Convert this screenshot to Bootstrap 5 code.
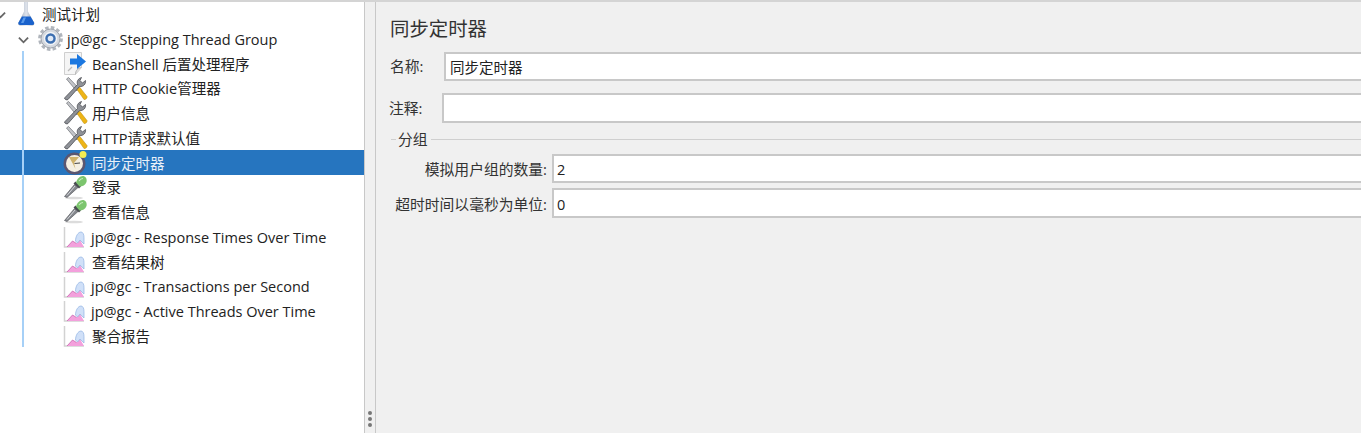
<!DOCTYPE html>
<html lang="en">
<head>
  <meta charset="UTF-8" />
  <meta name="viewport" content="width=device-width, initial-scale=1.0"/>
  <title>同步定时器</title>
  <link href="https://cdn.jsdelivr.net/npm/bootstrap@5.3.3/dist/css/bootstrap.min.css" rel="stylesheet"/>
  <style>
    html, body { height: 433px; overflow: hidden; }
    body {
      background: #f0f0f0;
      color: #222;
      font-family: "Open Sans", "Noto Sans CJK SC", sans-serif;
      font-size: 14.5px;
    }
    .app-shell { height: 433px; border-top: 2px solid #d4d4d4; }
    .tree-pane { width: 364px; background: #fff; position: relative; flex: none; overflow: hidden; }
    .tree-guide { position: absolute; left: 22px; top: 49px; height: 296px; width: 2px; background: #a6d0f7; z-index: 2; }
    .tree-list { margin-top: -.5px; }
    .tree-row { height: 24.75px; white-space: nowrap; padding-top: 2px; }
    .tree-row.is-active { background: #2675bf; color: #e9f0f8; }
    .tree-row svg { flex: none; }
    .lvl-0 { padding-left: 0; }
    .lvl-1 { padding-left: 18px; }
    .lvl-2 { padding-left: 63px; }
    .chev { width: 11px; height: 8px; }
    .lvl-0 .chev { margin-left: -5px; margin-right: 10px; }
    .lvl-1 .chev { margin-right: 9px; }
    .ico { width: 25px; height: 25px; margin-right: 4px; margin-top: -2px; }
    .lvl-0 .ico { width: 21px; margin-right: 5px; }
    .ico-tight { margin-right: 3px; }
    .split-bar {
      width: 12px; flex: none; position: relative;
      border-left: 1px solid #c8c8c8; border-right: 1px solid #c8c8c8;
    }
    .grip { position: absolute; left: 3px; top: 409px; }
    .grip span { display: block; width: 4px; height: 4px; border-radius: 50%; background: #777; margin-bottom: 2px; }
    .form-pane { padding: 14px 0 0 14px; min-width: 0; font-size: 14.8px; }
    .pane-title { font-size: 19.4px; line-height: 26px; margin: 0 0 10px 0; color: #333; font-weight: 400; }
    .field-label { color: #333; white-space: nowrap; }
    .jm-input {
      flex: 1 1 auto; min-width: 0;
      height: 29px; background: #fff; border: 2px solid #c8c8c8; border-right: 0;
      border-radius: 0; padding: 0 3px 0 3px; font-size: 14.5px; font-family: inherit; color: #222; outline: 0;
    }
    .name-row { margin-bottom: 12px; }
    .name-row .jm-input { padding-left: 4px; }
    .name-row .field-label { width: 54px; }
    .note-row { margin-left: -1px; }
    .note-row .field-label { width: 53px; }
    .note-row .jm-input { height: 30px; }
    .group-head { margin: 7px 0 0 1px; height: 18px; }
    .group-head .dash { width: 5px; border-top: 1px solid #cfcfcf; }
    .group-head .rest { flex: 1; border-top: 1px solid #cfcfcf; }
    .group-head span.cap { padding: 0 3px 0 2px; color: #333; }
    .group-row { margin-top: 5px; }
    .group-head + .group-row { margin-top: 6px; }
    .group-row .field-label { width: 162px; text-align: right; padding: 2px 5px 0 0; }
    .group-row .jm-input { padding-top: 2px; }
    .group-row + .group-row .jm-input { height: 30px; }
  </style>
</head>
<body>

<svg width="0" height="0" class="position-absolute">
  <defs>
    <linearGradient id="g-glass" x1="0" x2="1" y1="0" y2="0"><stop offset="0" stop-color="#98a4b6"/><stop offset=".5" stop-color="#dfe4ec"/><stop offset="1" stop-color="#8a96a8"/></linearGradient>
    <symbol id="i-chev" viewBox="0 0 12 8"><path d="M1 1.500 6 6.500 11 1.500" fill="none" stroke="#666" stroke-width="2"/></symbol>
    <symbol id="i-flask" viewBox="0 0 21 25">
      <path d="M8 1h4v9.500l6 11c.7 1.800-.2 3-1.800 3H4.300c-1.600 0-2.500-1.200-1.800-3l5.500-11z" fill="url(#g-glass)"/>
      <path d="M6 15.500h8.500l3.500 6c.5 1.500-.2 2.500-1.800 2.500H4.300c-1.600 0-2.300-1-1.800-2.500z" fill="#1a62cc"/>
      <path d="M7.500 16.500h2.500l-2.500 5.500H5z" fill="#5b9bea"/>
    </symbol>
    <symbol id="i-gear" viewBox="0 0 25 25">
      <circle cx="12.500" cy="12.500" r="9.500" fill="#d5d9df" stroke="#9ba1aa" stroke-width="1"/>
      <circle cx="12.500" cy="12.500" r="11" fill="none" stroke="#b0b5bc" stroke-width="2.800" stroke-dasharray="3.500 2.260"/>
      <circle cx="12.500" cy="12.500" r="6" fill="#3d6fb0" stroke="#f2f4f7" stroke-width="1.500"/>
      <circle cx="12.500" cy="12.500" r="2.800" fill="#dfe9f6"/>
    </symbol>
    <symbol id="i-bean" viewBox="0 0 25 25">
      <path d="M1.500 1.500h17v15l-6 7h-11z" fill="#f5f5f5" stroke="#cfcfcf"/>
      <path d="M12.500 23.500c0-4 2-6.500 6-7" fill="#dcdcdc" stroke="#b5b5b5"/>
      <path d="M5 20 9 16" stroke="#bbb" stroke-width="1.200"/>
      <path d="M14 3l9 7.500-9 7.500v-4.500h-7v-6h7z" fill="#1c78e0"/>
    </symbol>
    <symbol id="i-tools" viewBox="0 0 25 25">
      <path d="M3.500 3 5.500 1.500 16 12.500l-2.500 2.500z" fill="#c4c6ca" stroke="#6a6d73" stroke-width=".7"/>
      <path d="M14 13.500l2.500-2.500 7.500 9.500c.6 1.500-1.500 3.500-3 3z" fill="#eeb416" stroke="#b58a10" stroke-width=".5"/>
      <path d="M2 21.500 14.500 8.500c-1-3 .5-6 4-7l-1.500 3 2.500 2.500 3-2.500c.5 3.500-2 6.500-6 6l-11.500 13c-1 1-3.500 0-3.500-1.500z" fill="#8f9298" stroke="#3f4146" stroke-width=".7"/>
    </symbol>
    <symbol id="i-timer" viewBox="0 0 25 25">
      <circle cx="11.500" cy="13.500" r="11" fill="#5a5670"/>
      <circle cx="11.500" cy="13.500" r="8.500" fill="#f4efe2"/>
      <path d="M6 7h10l-5 6 1.500 6-2.500-5z" fill="#cfb26a"/>
      <path d="M11.500 13.500 17 13" stroke="#444" stroke-width="1"/>
      <circle cx="20" cy="4.500" r="3.500" fill="#f4ec52"/>
    </symbol>
    <symbol id="i-pipette" viewBox="0 0 25 25">
      <ellipse cx="11" cy="23" rx="9" ry="1.300" fill="#dcdcdc"/>
      <path d="M1.500 21.500 11.500 9.500l3.500 3-11 10z" fill="#85888e" stroke="#4c4e53" stroke-width=".6"/>
      <path d="M4 20.500 12 11" stroke="#d5d7db" stroke-width="1"/>
      <path d="M10.500 8.500l5.500 5 2-2-5.500-5z" fill="#4a4d52"/>
      <path d="M13 7.500c1-4 4.500-7 7.500-6.500 3 .8 3.500 4 3 6-1 3-4 4.500-7 4.500z" fill="#7cc56e"/>
      <path d="M16 6c1-1.500 2.500-2.500 4-2.500" stroke="#c9ecc1" stroke-width="1.200" fill="none"/>
    </symbol>
    <symbol id="i-graph" viewBox="0 0 25 25">
      <path d="M1.500 3v20H21" fill="none" stroke="#d2d2d2" stroke-width="1.500"/>
      <path d="M4 23 9.500 17l4 2.500L17 16l4 7z" fill="#f3a0dc"/>
      <path d="M12.500 17c0-4.500 2.500-9 5.500-9 2 0 3 2.500 3 5.500V20l-4-4-2.500 3z" fill="#d0e0f8" stroke="#8fb2e3" stroke-width=".7"/>
      <path d="M4 23 9.500 17l4 2.500" fill="none" stroke="#c25aa6" stroke-width=".7"/>
    </symbol>
  </defs>
</svg>

<div class="app-shell d-flex">
  <div class="tree-pane">
    <div class="tree-guide"></div>
    <div class="tree-list">
      <div class="tree-row d-flex align-items-center lvl-0"><svg class="chev"><use href="#i-chev"/></svg><svg class="ico"><use href="#i-flask"/></svg>测试计划</div>
      <div class="tree-row d-flex align-items-center lvl-1"><svg class="chev"><use href="#i-chev"/></svg><svg class="ico"><use href="#i-gear"/></svg>jp@gc - Stepping Thread Group</div>
      <div class="tree-row d-flex align-items-center lvl-2"><svg class="ico"><use href="#i-bean"/></svg>BeanShell 后置处理程序</div>
      <div class="tree-row d-flex align-items-center lvl-2"><svg class="ico"><use href="#i-tools"/></svg>HTTP Cookie管理器</div>
      <div class="tree-row d-flex align-items-center lvl-2"><svg class="ico"><use href="#i-tools"/></svg>用户信息</div>
      <div class="tree-row d-flex align-items-center lvl-2"><svg class="ico"><use href="#i-tools"/></svg>HTTP请求默认值</div>
      <div class="tree-row d-flex align-items-center lvl-2 is-active"><svg class="ico"><use href="#i-timer"/></svg>同步定时器</div>
      <div class="tree-row d-flex align-items-center lvl-2"><svg class="ico"><use href="#i-pipette"/></svg>登录</div>
      <div class="tree-row d-flex align-items-center lvl-2"><svg class="ico"><use href="#i-pipette"/></svg>查看信息</div>
      <div class="tree-row d-flex align-items-center lvl-2"><svg class="ico ico-tight"><use href="#i-graph"/></svg>jp@gc - Response Times Over Time</div>
      <div class="tree-row d-flex align-items-center lvl-2"><svg class="ico"><use href="#i-graph"/></svg>查看结果树</div>
      <div class="tree-row d-flex align-items-center lvl-2"><svg class="ico ico-tight"><use href="#i-graph"/></svg>jp@gc - Transactions per Second</div>
      <div class="tree-row d-flex align-items-center lvl-2"><svg class="ico ico-tight"><use href="#i-graph"/></svg>jp@gc - Active Threads Over Time</div>
      <div class="tree-row d-flex align-items-center lvl-2"><svg class="ico"><use href="#i-graph"/></svg>聚合报告</div>
    </div>
  </div>

  <div class="split-bar"><div class="grip"><span></span><span></span><span></span></div></div>

  <div class="form-pane flex-grow-1">
    <h1 class="pane-title">同步定时器</h1>
    <div class="d-flex align-items-center name-row">
      <label class="field-label">名称:</label>
      <input class="jm-input" value="同步定时器">
    </div>
    <div class="d-flex align-items-center note-row">
      <label class="field-label">注释:</label>
      <input class="jm-input" value="">
    </div>
    <div class="d-flex align-items-center group-head">
      <div class="dash"></div><span class="cap">分组</span><div class="rest"></div>
    </div>
    <div class="d-flex align-items-center group-row">
      <label class="field-label">模拟用户组的数量:</label>
      <input class="jm-input" value="2">
    </div>
    <div class="d-flex align-items-center group-row">
      <label class="field-label">超时时间以毫秒为单位:</label>
      <input class="jm-input" value="0">
    </div>
  </div>
</div>

<script src="https://cdn.jsdelivr.net/npm/bootstrap@5.3.3/dist/js/bootstrap.bundle.min.js"></script>
</body>
</html>
